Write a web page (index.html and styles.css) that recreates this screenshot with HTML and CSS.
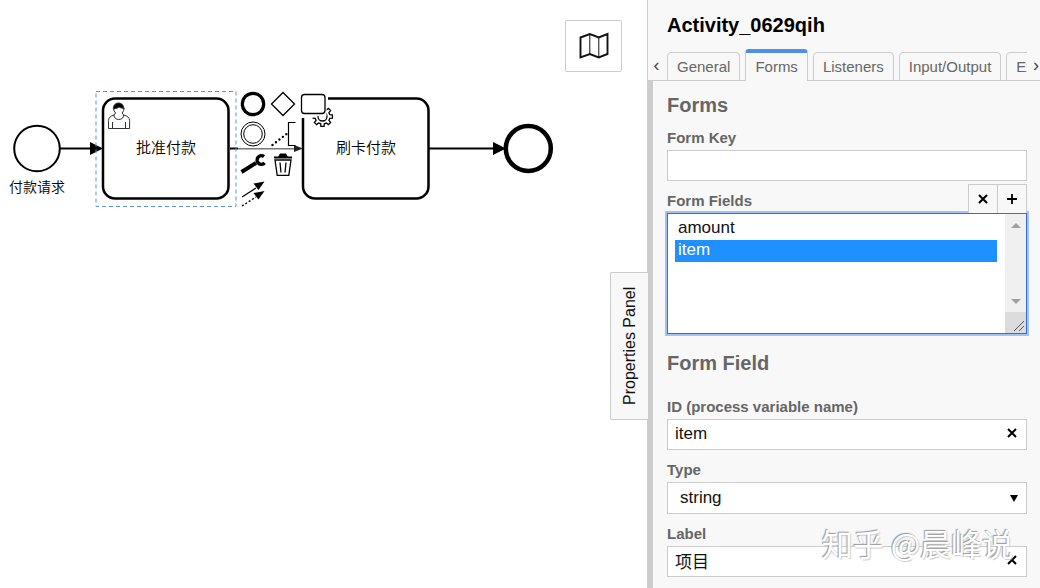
FILE: index.html
```html
<!DOCTYPE html>
<html lang="zh-CN">
<head>
<meta charset="utf-8">
<title>Process Modeler</title>
<link rel="stylesheet" href="styles.css">
</head>
<body>
<div class="app">
  <main class="canvas">
    <svg class="diagram" width="600" height="240" viewBox="0 0 600 240" role="img" aria-label="BPMN">
      <g fill="none" stroke="#000" stroke-width="2">
        <circle cx="37" cy="148.500" r="22.800"/>
        <path d="M60 148.500H92"/>
        <rect x="103" y="98.500" width="125.500" height="100" rx="12" stroke-width="2.500"/>
        <path d="M230 148.500H238"/>
        <path d="M238 148.800H296" stroke="#777" stroke-width="1.500"/>
        <rect x="303" y="98.500" width="125.500" height="100" rx="12" stroke-width="2.500"/>
        <path d="M429 148.500H494"/>
        <circle cx="528.300" cy="148.500" r="22.500" stroke-width="4.500"/>
      </g>
      <path d="M90 142l13 6.500-13 6.500z"/>
      <path d="M493 142l13 6.500-13 6.500z"/>
      <path d="M294 145l9 3.500-9 3.500z" fill="#222"/>
      <rect x="96" y="91.500" width="140" height="115" fill="none" stroke="#5c93dc" stroke-dasharray="4 3"/>
      <g fill="none" stroke="#333" stroke-width="1">
        <path d="M108.500 128.500v-8q0-4 5.500-5.500c0 3 2 4.500 4.800 4.500s4.800-1.500 4.800-4.500q6 1.500 6 5.500v8zM112.500 128v-6M125.500 128v-6"/>
        <path d="M114 115l1.500-2q-2-2-2-5M123.600 115l-1.500-2q2-2 2-5"/>
        <path d="M113.300 109c-.5-8 11-8 10.500 0-2-1.500-4-1-5-2-1 1.500-4 1.500-5.500 2z" fill="#000"/>
      </g>
      <text class="node-label" x="166" y="153" text-anchor="middle">批准付款</text>
      <text class="node-label" x="366" y="153" text-anchor="middle">刷卡付款</text>
      <text class="event-label" x="37" y="192" text-anchor="middle">付款请求</text>

      <path d="M300 92h28v26h-28z" fill="#fff"/>
      <g transform="translate(322.500 116.500)" fill="#fff" stroke="#000" stroke-width="1.300">
        <path d="M3.900-6.400L5.900-8.100 8.100-5.900 6.400-3.900 7.300-1.800 9.900-1.600 9.900 1.600 7.300 1.800 6.400 3.900 8.100 5.900 5.900 8.100 3.900 6.400 1.800 7.300 1.600 9.900-1.600 9.900-1.800 7.300-3.900 6.400-5.900 8.100-8.100 5.900-6.400 3.900-7.300 1.800-9.900 1.600"/>
        <circle r="4.500"/>
      </g>
      <path d="M299 92h27.500v24h-27.500z" fill="#fff"/>
      <g fill="none" stroke="#000">
        <circle cx="253" cy="104" r="10.700" stroke-width="3.200"/>
        <path d="M283 92.500l11.500 11.500-11.500 11.500-11.500-11.500z" stroke-width="1.300"/>
        <rect x="301.500" y="94.500" width="23.500" height="19" rx="3" stroke-width="1.300"/>
        <circle cx="253" cy="134" r="12"/>
        <circle cx="253" cy="134" r="9.300"/>
        <path d="M295.500 122.500h-7v23h7" stroke-width="1.200"/>
        <path d="M272.500 145L286.500 134" stroke-width="2.400" stroke-linecap="round" stroke-dasharray="0 4.400"/>
        <path d="M241.500 172L256 163" stroke-width="4"/>
        <path d="M264 156.700a4.300 4.300 0 1 0 .6 6.200" stroke-width="3.400"/>
        <path d="M275 160l2.200 15.300h11.600L291 160zM280 162.500l1 10M286 162.500l-1 10" stroke-width="1.300"/>
        <path d="M274 157.500h18" stroke-width="2"/>
        <path d="M242 197l14-9" stroke-width="1.200"/>
        <path d="M242 206l14-9" stroke-width="1.400" stroke-dasharray="2 2"/>
      </g>
      <path d="M278 157l2-3.500h6l2 3.500zM264.500 181.500l-6 8.500-5-6.500zM264.500 191l-6 8.500-5-6.500z"/>
    </svg>
    <button class="minimap" type="button" aria-label="Toggle minimap">
      <svg width="30" height="28" viewBox="0 0 30 28" fill="none" stroke="#111">
        <path d="M1.500 5.500l9.300-3.500 9 3.500 8.700-3.500v20l-8.700 3.500-9-3.500-9.300 3.500z" stroke-width="1.900"/>
        <path d="M10.800 2v20M19.800 5.500v20" stroke-width="1"/>
      </svg>
    </button>
  </main>
  <aside class="panel">
    <button class="panel-toggle" type="button">Properties Panel</button>
    <header class="panel-header">
      <h1 class="title">Activity_0629qih</h1>
      <nav class="tabs">
        <button class="tab-scroll" type="button" aria-label="Previous tabs">‹</button>
        <div class="tab-list">
          <a class="tab" href="#general">General</a>
          <a class="tab active" href="#forms">Forms</a>
          <a class="tab" href="#listeners">Listeners</a>
          <a class="tab" href="#io">Input/Output</a>
          <a class="tab" href="#extensions">Extensions</a>
        </div>
        <button class="tab-scroll next" type="button" aria-label="Next tabs">›</button>
      </nav>
    </header>
    <form class="form" id="forms">
      <h2 class="heading">Forms</h2>
      <div class="field">
        <label class="label" for="form-key">Form Key</label>
        <input class="control" id="form-key" type="text">
      </div>
      <div class="field">
        <div class="label-row">
          <label class="label" for="form-fields">Form Fields</label>
          <div class="actions">
            <button class="action" type="button" aria-label="Remove"><svg class="icon" viewBox="0 0 12 12"><path d="M2 2l8 8M10 2l-8 8"/></svg></button>
            <button class="action" type="button" aria-label="Add"><svg class="icon plus" viewBox="0 0 12 12"><path d="M6 1v10M1 6h10"/></svg></button>
          </div>
        </div>
        <div class="list-box">
          <select class="list" id="form-fields" size="5">
            <option>amount</option>
            <option selected>item</option>
          </select>
          <div class="scrollbar">
            <span class="arrow up"></span>
            <span class="arrow down"></span>
            <svg class="grip" viewBox="0 0 21 21"><path d="M9 19L19 9M14 19l5-5"/></svg>
          </div>
        </div>
      </div>
      <h2 class="heading sub">Form Field</h2>
      <div class="field">
        <label class="label" for="field-id">ID (process variable name)</label>
        <div class="clearable">
          <input class="control" id="field-id" type="text" value="item">
          <button class="clear" type="button" aria-label="Clear ID"><svg class="icon" viewBox="0 0 12 12"><path d="M2 2l8 8M10 2l-8 8"/></svg></button>
        </div>
      </div>
      <div class="field">
        <label class="label" for="field-type">Type</label>
        <div class="clearable">
          <select class="control dropdown" id="field-type"><option>string</option></select>
          <span class="caret"></span>
        </div>
      </div>
      <div class="field">
        <label class="label" for="field-label">Label</label>
        <div class="clearable">
          <input class="control" id="field-label" type="text" value="项目">
          <button class="clear" type="button" aria-label="Clear label"><svg class="icon" viewBox="0 0 12 12"><path d="M2 2l8 8M10 2l-8 8"/></svg></button>
        </div>
      </div>
    </form>
    <div class="watermark">知乎 @晨峰说</div>
  </aside>
</div>
</body>
</html>
```

FILE: styles.css
```css
* { box-sizing: border-box; }

body {
  margin: 0;
  font-family: "Liberation Sans", "Noto Sans CJK SC", sans-serif;
  background: #fff;
  color: #111;
}

button, input, select { font: inherit; color: inherit; border-radius: 0; }

.app { display: flex; min-height: 100vh; overflow: hidden; }

.canvas { flex: 1; min-width: 0; position: relative; }

.diagram { display: block; max-width: none; }

.node-label, .event-label {
  font-family: "Noto Sans CJK SC", sans-serif;
  font-weight: 350;
  font-size: 15px;
  fill: #000;
}

.event-label { font-size: 14px; }

.minimap {
  position: absolute;
  top: 20px;
  right: 25px;
  width: 57px;
  height: 52px;
  padding: 0;
  display: flex;
  align-items: center;
  justify-content: center;
  background: #fff;
  border: 1px solid #ccc;
  border-radius: 2px;
}

.panel {
  position: relative;
  width: 393px;
  flex: none;
  display: flex;
  flex-direction: column;
  background: #f8f8f8;
}

.panel-toggle {
  position: absolute;
  left: -37px;
  top: 272px;
  width: 38px;
  height: 148px;
  padding: 0;
  writing-mode: vertical-rl;
  transform: rotate(180deg);
  text-align: center;
  font-size: 16px;
  background: #f8f8f8;
  border: 1px solid #ccc;
  border-left: 0;
  border-radius: 0 2px 2px 0;
}

.panel-header { border-left: 1px solid #ccc; }

.title {
  margin: 0;
  padding: 13px 19px 12px;
  font-size: 20px;
  line-height: 24px;
  color: #000;
}

.tabs { display: flex; height: 32px; border-bottom: 1px solid #ccc; }

.tab-scroll {
  width: 19px;
  padding: 0 2px 0 0;
  border: 0;
  background: none;
  font-size: 18px;
  line-height: 28px;
  color: #444;
}

.tab-scroll.next { width: 13px; padding: 0 0 0 5px; }

.tab-list {
  flex: 1;
  min-width: 0;
  display: flex;
  align-items: flex-end;
  gap: 5px;
  height: 32px;
  overflow: hidden;
}

.tab {
  flex: none;
  height: 29px;
  padding: 0 9px;
  font-size: 15px;
  line-height: 28px;
  color: #666;
  text-decoration: none;
  border: 1px solid #ccc;
  border-radius: 4px 4px 0 0;
}

.tab.active {
  height: 32px;
  background: #f8f8f8;
  border-top: 4px solid #4d90ea;
  border-bottom: 0;
}

.form {
  flex: 1;
  padding: 12px 13px 11px 14px;
  border-left: 6px solid #ccc;
  color: #111;
}

.heading { margin: 0 0 12px; font-size: 20px; line-height: 24px; color: #666; }

.heading.sub { margin: 17px 0 23px; }

.field + .field { margin-top: 11px; }

.label { display: block; margin-bottom: 3px; font-size: 15px; line-height: 18px; font-weight: bold; color: #666; }

.label-row { display: flex; justify-content: space-between; align-items: flex-end; margin-top: -8px; }

.actions { display: flex; }

.action {
  width: 30px;
  height: 29px;
  padding: 0;
  display: flex;
  align-items: center;
  justify-content: center;
  background: #f8f8f8;
  border: 1px solid #ccc;
  border-bottom: 0;
}

.action + .action { margin-left: -1px; }

.icon { width: 12px; height: 12px; fill: none; stroke: #000; stroke-width: 2; }

.plus { stroke-width: 1.800; }

.control {
  display: block;
  width: 100%;
  height: 31px;
  padding: 0 7px 2px;
  font-size: 17px;
  background: #fff;
  border: 1px solid #ccc;
}

.dropdown { height: 32px; padding: 0 12px 1px; appearance: none; }

.clearable { position: relative; }

.clear {
  position: absolute;
  top: 0;
  right: 1px;
  width: 28px;
  height: 28px;
  padding: 0;
  display: flex;
  align-items: center;
  justify-content: center;
  border: 0;
  background: none;
}

.caret {
  position: absolute;
  top: 13px;
  right: 9px;
  border: 4px solid transparent;
  border-top: 7px solid #000;
  border-bottom: 0;
  pointer-events: none;
}

.list-box {
  display: flex;
  height: 121px;
  background: #fff;
  border: 1px solid #3b6bd0;
  box-shadow: 0 0 0 2px #a0c3fb;
}

.list {
  flex: 1;
  min-width: 0;
  padding: 4px 8px 4px 7px;
  border: 0;
  outline: 0;
  overflow: hidden;
  background: #fff;
  font-size: 17px;
}

.list option { height: 22px; min-height: 22px; padding: 0 3px; line-height: 20px; }

.list option:checked {
  background-image: linear-gradient(#1e90ff, #1e90ff);
  -webkit-text-fill-color: #fff;
}

.scrollbar {
  width: 21px;
  display: flex;
  flex-direction: column;
  align-items: center;
  background: #f0f0f0;
}

.arrow { border: 5px solid transparent; }
.arrow.up { margin-top: 9px; border-top: 0; border-bottom-color: #a0a0a0; }
.arrow.down { margin-top: auto; margin-bottom: 8px; border-bottom: 0; border-top-color: #a0a0a0; }

.grip { width: 21px; height: 21px; flex: none; background: #dcdcdc; fill: none; stroke: #555; }

.watermark {
  position: absolute;
  right: 27px;
  bottom: 23px;
  font-family: "Noto Sans CJK SC", sans-serif;
  font-size: 31px;
  line-height: 44px;
  font-weight: 400;
  white-space: nowrap;
  color: #fff;
  text-shadow: -1px -1px 1px #999, 1px 1px 1px #ccc;
  pointer-events: none;
}
```
